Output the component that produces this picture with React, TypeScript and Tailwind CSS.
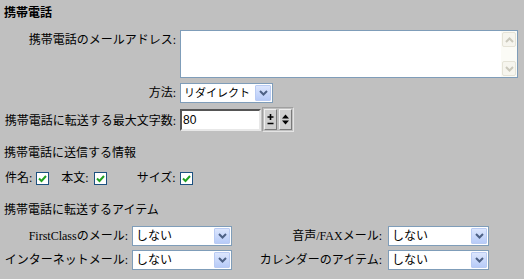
const serif = "font-['Liberation_Serif','Noto_Sans_CJK_JP',serif]";

function Chevron() {
  return (
    <svg width="9" height="6" viewBox="0 0 9 6">
      <path d="M1 1 L4.5 4.5 L8 1" fill="none" stroke="#4d6185" strokeWidth="2" />
    </svg>
  );
}

function Select({ value, w, small }: { value: string; w: string; small?: boolean }) {
  return (
    <div className={`${w} h-[20px] flex items-stretch border border-[#7f9db9] bg-white`}>
      <div
        className={`flex-1 min-w-0 flex items-center pl-[3px] whitespace-nowrap overflow-hidden leading-none font-['Liberation_Sans','Noto_Sans_CJK_JP',sans-serif] text-black ${
          small ? "text-[11px]" : "text-[12px]"
        }`}
      >
        {value}
      </div>
      <div className="m-[1px] w-[16px] shrink-0 flex items-center justify-center bg-gradient-to-b from-[#dce6fd] to-[#b7cbf8] border border-[#b9cbf3] rounded-[1px]">
        <Chevron />
      </div>
    </div>
  );
}

function Check() {
  return (
    <div className="w-[13px] h-[13px] border border-[#1c5180] bg-white flex items-center justify-center">
      <svg width="9" height="9" viewBox="0 0 9 9">
        <path d="M1 4.5 L3.5 7 L8 2" fill="none" stroke="#21a121" strokeWidth="2" />
      </svg>
    </div>
  );
}

function ScrollBtn({ up }: { up?: boolean }) {
  return (
    <div className="h-[15px] mx-[1px] flex items-center justify-center bg-[#f6f5ee] border border-[#e5e3d7] rounded-[2px]">
      <svg width="9" height="6" viewBox="0 0 9 6">
        <path
          d={up ? "M1 5 L4.5 1.5 L8 5" : "M1 1 L4.5 4.5 L8 1"}
          fill="none"
          stroke="#cbc9bc"
          strokeWidth="2"
        />
      </svg>
    </div>
  );
}

export default function App() {
  return (
    <div className={`w-[524px] h-[279px] bg-[#c0c0c0] text-black text-[12px] ${serif} pt-[4px] pl-[4px] overflow-hidden`}>
      <div className="font-bold text-[12px] leading-[16px] font-['Noto_Sans_CJK_JP',sans-serif]">携帯電話</div>

      {/* mobile address / method / max chars */}
      <div className="mt-[10px] grid grid-cols-[172px_auto] gap-x-[4px] gap-y-[5px]">
        <div className="text-right leading-[16px] pt-[2px]">携帯電話のメールアドレス:</div>
        <div className="w-[338px] h-[48px] border border-[#7f9db9] bg-white flex justify-end">
          <div className="w-[16px] flex flex-col justify-between py-[1px] bg-[#fbfbf6]">
            <ScrollBtn up />
            <ScrollBtn />
          </div>
        </div>

        <div className="text-right leading-[16px] self-center">方法:</div>
        <Select value="リダイレクト" w="w-[93px]" small />

        <div className="text-right leading-[16px] self-center mt-[2px]">携帯電話に転送する最大文字数:</div>
        <div className="flex items-center gap-[1px] mt-[-1px]">
          <div className="w-[81px] h-[22px] border-2 border-t-[#555] border-l-[#555] border-r-[#e8e8e8] border-b-[#e8e8e8] bg-white flex items-center pl-[1px] text-[12px] font-['Liberation_Sans',sans-serif]">
            80
          </div>
          <div className="flex gap-[2px] p-[1px] border border-[#a0a0a0] border-r-[#e4e4e4] border-b-[#e4e4e4]">
            <div className="w-[13px] h-[21px] bg-[#cfcfcf] border border-t-[#f0f0f0] border-l-[#f0f0f0] border-r-[#7a7a7a] border-b-[#7a7a7a] flex items-center justify-center">
              <svg width="9" height="13" viewBox="0 0 9 13">
                <path d="M4.5 1 V7 M1.5 4 H7.5 M1.5 10.5 H7.5" stroke="#000" strokeWidth="1.6" fill="none" />
              </svg>
            </div>
            <div className="w-[13px] h-[21px] bg-[#cfcfcf] border border-t-[#f0f0f0] border-l-[#f0f0f0] border-r-[#7a7a7a] border-b-[#7a7a7a] flex items-center justify-center">
              <svg width="9" height="11" viewBox="0 0 9 11">
                <path d="M4.5 0.5 L8 4.5 H1 Z M1 6.5 H8 L4.5 10.5 Z" fill="#000" />
              </svg>
            </div>
          </div>
        </div>
      </div>

      {/* info sent */}
      <div className="mt-[13px] leading-[16px]">携帯電話に送信する情報</div>
      <div className="mt-[9px] flex items-center leading-[16px] pl-[1px]">
        <span>件名:</span>
        <span className="ml-[4px]"><Check /></span>
        <span className="ml-[12px]">本文:</span>
        <span className="ml-[5px]"><Check /></span>
        <span className="ml-[30px]">サイズ:</span>
        <span className="ml-[4px]"><Check /></span>
      </div>

      {/* items forwarded */}
      <div className="mt-[16px] leading-[16px]">携帯電話に転送するアイテム</div>
      <div className="mt-[8px] grid grid-cols-[124px_100px_148px_101px] gap-x-[4px] gap-y-[4px] items-center">
        <div className="text-right leading-[16px]">FirstClassのメール:</div>
        <Select value="しない" w="w-[100px]" />
        <div className="text-right leading-[16px] pr-[2px]">音声/FAXメール:</div>
        <Select value="しない" w="w-[101px]" />

        <div className="text-right leading-[16px]">インターネットメール:</div>
        <Select value="しない" w="w-[100px]" />
        <div className="text-right leading-[16px] pr-[2px]">カレンダーのアイテム:</div>
        <Select value="しない" w="w-[101px]" />
      </div>
    </div>
  );
}
